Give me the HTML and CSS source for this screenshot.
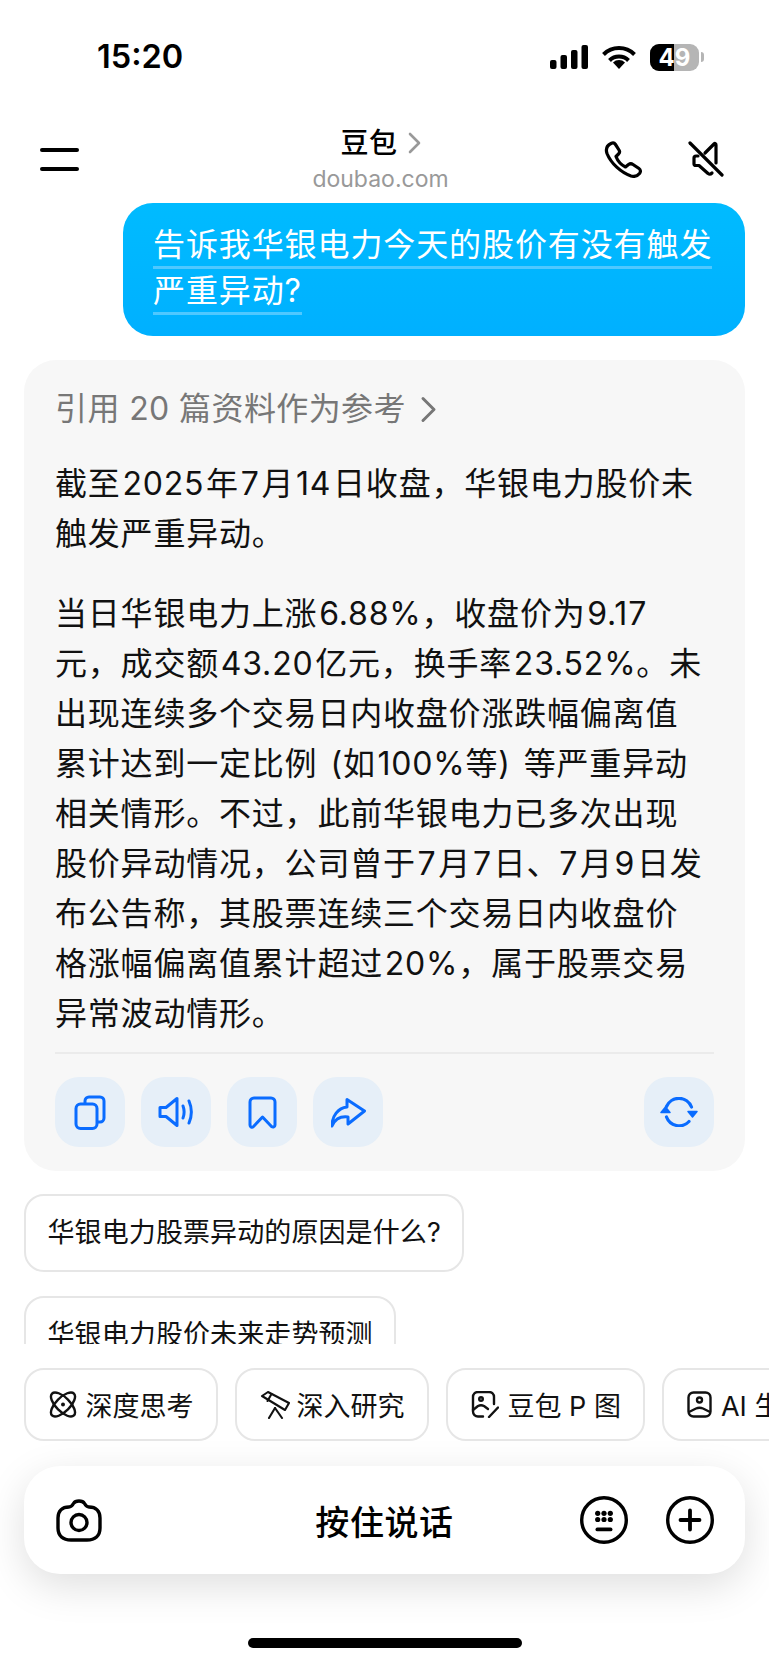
FILE: index.html
```html
<!DOCTYPE html>
<html lang="zh-CN">
<head>
    <meta charset="UTF-8">
    <meta name="viewport" content="width=device-width, initial-scale=1.0">
    <title>豆包</title>
    <link rel="stylesheet" href="styles.css">
</head>
<body>
    <div class="phone">
        <div class="status-bar">
            <span class="time">15:20</span>
            <div class="status-icons">
                <svg width="38" height="24" viewBox="0 0 38 24"><rect x="0" y="15" width="6.500" height="9" rx="2"/><rect x="10.500" y="10" width="6.500" height="14" rx="2"/><rect x="21" y="5" width="6.500" height="19" rx="2"/><rect x="31.500" y="0" width="6.500" height="24" rx="2"/></svg>
                <svg width="34" height="24" viewBox="0 0 34 24" fill="none" stroke="#000" stroke-width="4"><path d="M1.500 9.500a22 22 0 0 1 31 0"/><path d="M7.500 15.500a13.500 13.500 0 0 1 19 0"/><path d="M17 24l-6-6.500a8.500 8.500 0 0 1 12 0z" fill="#000" stroke="none"/></svg>
                <div class="battery">
                    <div class="battery-body"><span class="battery-fill"></span><span class="battery-num">49</span></div>
                    <span class="battery-cap"></span>
                </div>
            </div>
        </div>

        <div class="nav">
            <div class="menu-icon"><span></span><span></span></div>
            <div class="nav-title">
                <div class="nav-name">豆包
                    <svg width="13" height="22" viewBox="0 0 13 22" fill="none" stroke="#999" stroke-width="2.600" stroke-linecap="round" stroke-linejoin="round"><path d="M2 2l9 9-9 9"/></svg>
                </div>
                <div class="nav-url">doubao.com</div>
            </div>
            <div class="nav-actions">
                <svg width="38" height="37" viewBox="0 0 38 37" fill="none" stroke="#000" stroke-width="3.200" stroke-linejoin="round"><path d="M7 2.500c2-1 3.500-.5 4.500 1L15 9c1 1.500.5 3-.5 4l-2.500 2.500c1.500 4 5.500 8.500 9.500 10.500l3-2.500c1.500-1 3-1 4.500 0l6 4c1.500 1 2 3 .5 5-2 2.500-5 3.500-8.500 2.500C17 31.500 7 22.500 3 12.500 1.500 8 3 4.500 7 2.500z"/></svg>
                <svg width="36" height="36" viewBox="0 0 36 36" fill="none" stroke="#000" stroke-width="3.200" stroke-linecap="round" stroke-linejoin="round"><path d="M2 2l32 32"/><path d="M28 22V4c0-1.500-1-2-2-1l-9 9"/><path d="M10 15H8c-1.500 0-2 .5-2 2v6c0 1 .5 1.500 2 1.500h3l9 8c1.500 1 3 .5 4-.5"/></svg>
            </div>
        </div>

        <div class="chat">
            <div class="bubble-row">
                <div class="bubble">
                    <span class="bubble-line">告诉我华银电力今天的股价有没有触发</span><br>
                    <span class="bubble-line">严重异动?</span>
                </div>
            </div>

            <div class="answer">
                <div class="refs">引用 20 篇资料作为参考
                    <svg width="17" height="27" viewBox="0 0 17 27" fill="none" stroke="#777" stroke-width="3" stroke-linecap="round" stroke-linejoin="round"><path d="M3 2.500l11 11-11 11"/></svg>
                </div>
                <p class="para">截至 2025 年 7 月 14 日收盘，华银电力股价未<br>触发严重异动。</p>
                <p class="para">当日华银电力上涨 6.88%，收盘价为 9.17<br>元，成交额 43.20 亿元，换手率 23.52%。未<br>出现连续多个交易日内收盘价涨跌幅偏离值<br>累计达到一定比例<span class="aside">(如 100%等)</span>等严重异动<br>相关情形。不过，此前华银电力已多次出现<br>股价异动情况，公司曾于 7 月 7 日、7 月 9 日发<br>布公告称，其股票连续三个交易日内收盘价<br>格涨幅偏离值累计超过 20%，属于股票交易<br>异常波动情形。</p>
                <div class="answer-actions">
                    <button class="act">
                        <svg width="32" height="35" viewBox="0 0 32 35" fill="none" stroke="#0a6cff" stroke-width="3" stroke-linejoin="round"><rect x="2" y="9" width="21" height="24.500" rx="4.500"/><path d="M11 9V6a4 4 0 0 1 4-4h11a4 4 0 0 1 4 4v17a4 4 0 0 1-4 4h-3"/></svg>
                    </button>
                    <button class="act">
                        <svg width="37" height="32" viewBox="0 0 37 32" fill="none" stroke="#0a6cff" stroke-width="3" stroke-linecap="round" stroke-linejoin="round"><path d="M19 2.500v27L8 20.500H2v-9h6z"/><path d="M25 10c1.500 4 1.500 8 0 12"/><path d="M31 5c3 7 3 15 0 22"/></svg>
                    </button>
                    <button class="act">
                        <svg width="29" height="33" viewBox="0 0 29 33" fill="none" stroke="#0a6cff" stroke-width="3" stroke-linejoin="round"><path d="M2 6a4 4 0 0 1 4-4h17a4 4 0 0 1 4 4v23c0 2-2 2.500-3.500 1.500L14.500 21 5.500 30.500C4 32 2 31 2 29z"/></svg>
                    </button>
                    <button class="act">
                        <svg width="35" height="31" viewBox="0 0 35 31" fill="none" stroke="#0a6cff" stroke-width="3" stroke-linecap="round" stroke-linejoin="round"><path d="M16 10V2.500L33.500 14 17 27v-7c-8-1-13 2-16 9 0-10 6-18 15-19z"/></svg>
                    </button>
                    <button class="act act-right">
                        <svg width="38" height="30" viewBox="0 0 38 30" fill="none" stroke="#0a6cff" stroke-width="3.200" stroke-linecap="round"><path d="M6.500 9.500A13.500 13.500 0 0 1 31.500 10"/><path d="M29 24.500A13.500 13.500 0 0 1 6.500 20"/><path d="M28 14.500h9l-4.500 5.500z" fill="#0a6cff" stroke="#0a6cff" stroke-width="1.500" stroke-linejoin="round"/><path d="M1 15.500h9l-4.500-5.500z" fill="#0a6cff" stroke="#0a6cff" stroke-width="1.500" stroke-linejoin="round"/></svg>
                    </button>
                </div>
            </div>

            <div class="suggest">华银电力股票异动的原因是什么?</div>
            <div class="suggest">华银电力股价未来走势预测</div>
        </div>

        <div class="chips">
            <div class="chip">
                <svg width="28" height="27" viewBox="0 0 28 27" fill="none" stroke="#111" stroke-width="2.400"><ellipse cx="14" cy="13.500" rx="7" ry="15.500" transform="rotate(45 14 13.500)"/><ellipse cx="14" cy="13.500" rx="7" ry="15.500" transform="rotate(-45 14 13.500)"/><circle cx="14" cy="13.500" r="2" fill="#111" stroke="none"/></svg>
                深度思考
            </div>
            <div class="chip">
                <svg class="scope" width="30" height="28" viewBox="0 0 30 28" fill="none" stroke="#111" stroke-width="2.100" stroke-linecap="round" stroke-linejoin="round"><path d="M2 5l6-4 21 11-4 7z"/><path d="M11.500 3l-4 7"/><path d="M15 17L9 27"/><path d="M15 17l7 10"/></svg>
                深入研究
            </div>
            <div class="chip">
                <svg width="28" height="27" viewBox="0 0 28 27" fill="none" stroke="#111" stroke-width="2.400" stroke-linecap="round" stroke-linejoin="round"><path d="M12 25.500H7a5 5 0 0 1-5-5V6a5 5 0 0 1 5-5h11a5 5 0 0 1 5 5v7"/><circle cx="10" cy="8" r="1.800"/><path d="M2 19l5-4c2-1 4-1 6 0l4 3"/><path d="M27 16.500l-9 9.500"/></svg>
                豆包 P 图
            </div>
            <div class="chip">
                <svg width="25" height="27" viewBox="0 0 25 27" fill="none" stroke="#111" stroke-width="2.400" stroke-linejoin="round"><rect x="1.500" y="1.500" width="22" height="24" rx="5"/><circle cx="12.500" cy="9" r="2.500"/><path d="M2 21l7-3.500c2.500-1 4.500-1 7 0l7 3.500"/></svg>
                AI 生图
            </div>
        </div>

        <div class="input-bar">
            <svg width="46" height="43" viewBox="0 0 46 43" fill="none" stroke="#000" stroke-width="3.400" stroke-linejoin="round"><path d="M13 8c2 0 3-1 4.500-3.500C19 2 21 2 23 2s4 0 5.500 2.500C30 7 31 8 33 8c7 0 11 4 11 11v10c0 8-5 12-13 12H15C7 41 2 37 2 29V19C2 12 6 8 13 8z"/><circle cx="23" cy="23.500" r="8"/></svg>
            <span class="hold">按住说话</span>
            <div class="input-right">
                <svg width="48" height="48" viewBox="0 0 48 48"><circle cx="24" cy="24" r="22.300" fill="none" stroke="#000" stroke-width="3.400"/><circle cx="17.700" cy="17.300" r="2.600"/><circle cx="24" cy="17.300" r="2.600"/><circle cx="30.300" cy="17.300" r="2.600"/><circle cx="17.700" cy="23.500" r="2.600"/><circle cx="24" cy="23.500" r="2.600"/><circle cx="30.300" cy="23.500" r="2.600"/><rect x="15.500" y="31.500" width="17" height="3.800" rx="1.900"/></svg>
                <svg width="48" height="48" viewBox="0 0 48 48" fill="none" stroke="#000" stroke-width="3.400" stroke-linecap="round"><circle cx="24" cy="24" r="22.300"/><path d="M24 14.500v19M14.500 24h19" stroke-width="3.800"/></svg>
            </div>
        </div>

        <div class="home-bar"></div>
    </div>
</body>
</html>
```
FILE: styles.css
```css
* {
    box-sizing: border-box;
}
body {
    margin: 0;
    background: #fff;
    font-family: Inter, "Noto Sans CJK SC", sans-serif;
    color: #111;
}
svg {
    display: block;
    flex: none;
}
.phone {
    width: 769px;
    height: 1665px;
    overflow: hidden;
    display: flex;
    flex-direction: column;
}
.status-bar {
    height: 115px;
    padding: 39px 65px 0 97px;
    display: flex;
    justify-content: space-between;
}
.time {
    font-size: 32.500px;
    line-height: 36px;
    font-weight: 600;
    color: #000;
}
.status-icons {
    display: flex;
    gap: 14px;
    height: 36px;
    align-items: center;
}
.battery {
    display: flex;
    align-items: center;
    gap: 2px;
}
.battery-body {
    position: relative;
    width: 49px;
    height: 27px;
    border-radius: 9px;
    background: #b5b5b5;
    overflow: hidden;
}
.battery-fill {
    display: block;
    width: 24px;
    height: 27px;
    background: #000;
}
.battery-num {
    position: absolute;
    left: 0;
    right: 0;
    top: 0;
    text-align: center;
    font-size: 24px;
    line-height: 27px;
    font-weight: 700;
    color: #fff;
}
.battery-cap {
    width: 3px;
    height: 10px;
    border-radius: 0 3px 3px 0;
    background: #b5b5b5;
}
.nav {
    height: 88px;
    padding: 0 45px 0 40px;
    display: flex;
    justify-content: space-between;
    align-items: center;
    position: relative;
}
.menu-icon {
    width: 39px;
    display: flex;
    flex-direction: column;
    gap: 15px;
}
.menu-icon span {
    height: 4px;
    border-radius: 2px;
    background: #000;
}
.nav-title {
    position: absolute;
    left: 0;
    right: 8px;
    top: 10px;
    text-align: center;
}
.nav-name {
    font-size: 28px;
    line-height: 36px;
    letter-spacing: .5px;
    font-weight: 500;
    color: #000;
    display: flex;
    justify-content: center;
    align-items: center;
    gap: 10px;
}
.nav-url {
    font-size: 23px;
    line-height: 28px;
    margin-top: 4px;
    color: #999;
}
.nav-actions {
    display: flex;
    gap: 46px;
    position: relative;
}
.chat {
    height: 1141px;
    overflow: hidden;
    flex: none;
}
.bubble-row {
    padding: 0 24px 0 123px;
    margin-bottom: 24px;
}
.bubble {
    height: 133px;
    padding: 20px 30px;
    border-radius: 30px;
    background: linear-gradient(#00bbff, #00b0ff);
    color: #fff;
    font-size: 32px;
    line-height: 44px;
    white-space: nowrap;
}
.bubble-line {
    display: inline-block;
    border-bottom: 3px solid #4fc8ff;
    line-height: 43px;
    letter-spacing: .9px;
}
.answer {
    margin: 0 24px 23px;
    height: 811px;
    padding: 29px 31px 0;
    border-radius: 32px;
    background: #f7f7f7;
}
.refs {
    font-size: 32px;
    line-height: 40px;
    letter-spacing: .4px;
    color: #777;
    display: flex;
    align-items: center;
    gap: 14px;
    white-space: nowrap;
}
.para {
    margin: 30px 0 0;
    font-size: 32px;
    line-height: 50px;
    letter-spacing: .8px;
    word-spacing: -8px;
    color: #111;
    white-space: nowrap;
}
.aside {
    margin: 0 13px;
}
.answer-actions {
    margin-top: 13px;
    padding-top: 23px;
    border-top: 2px solid #ebebeb;
    display: flex;
    gap: 16px;
}
.act {
    width: 70px;
    height: 70px;
    padding: 0;
    border: none;
    border-radius: 24px;
    background: #e6eff8;
    display: flex;
    justify-content: center;
    align-items: center;
}
.act-right {
    margin-left: auto;
}
.suggest {
    width: fit-content;
    height: 78px;
    margin: 0 0 24px 24px;
    padding: 0 21.500px;
    border: 2px solid #e6e6e6;
    border-radius: 20px;
    font-size: 27px;
    letter-spacing: .1px;
    line-height: 74px;
    color: #111;
}
.chips {
    margin-top: 24px;
    padding-left: 24px;
    display: flex;
    gap: 17px;
    flex: none;
}
.chip {
    height: 73px;
    padding: 0 22.500px;
    flex: none;
    display: flex;
    align-items: center;
    gap: 9px;
    border: 2px solid #e6e6e6;
    border-radius: 20px;
    font-size: 27px;
    white-space: nowrap;
}
.scope {
    margin-right: -2px;
}
.input-bar {
    margin: 25px 24px 0;
    height: 108px;
    flex: none;
    padding: 0 31px 0 32px;
    border-radius: 36px;
    background: #fff;
    box-shadow: 0 12px 40px rgba(0, 0, 0, .13);
    display: flex;
    justify-content: space-between;
    align-items: center;
    position: relative;
}
.hold {
    position: absolute;
    left: 0;
    right: 0;
    text-align: center;
    font-size: 34px;
    letter-spacing: .6px;
    font-weight: 500;
    color: #000;
}
.input-right {
    display: flex;
    gap: 38px;
}
.home-bar {
    width: 274px;
    height: 10px;
    margin: 64px auto 0;
    border-radius: 5px;
    background: #000;
    flex: none;
}
```
